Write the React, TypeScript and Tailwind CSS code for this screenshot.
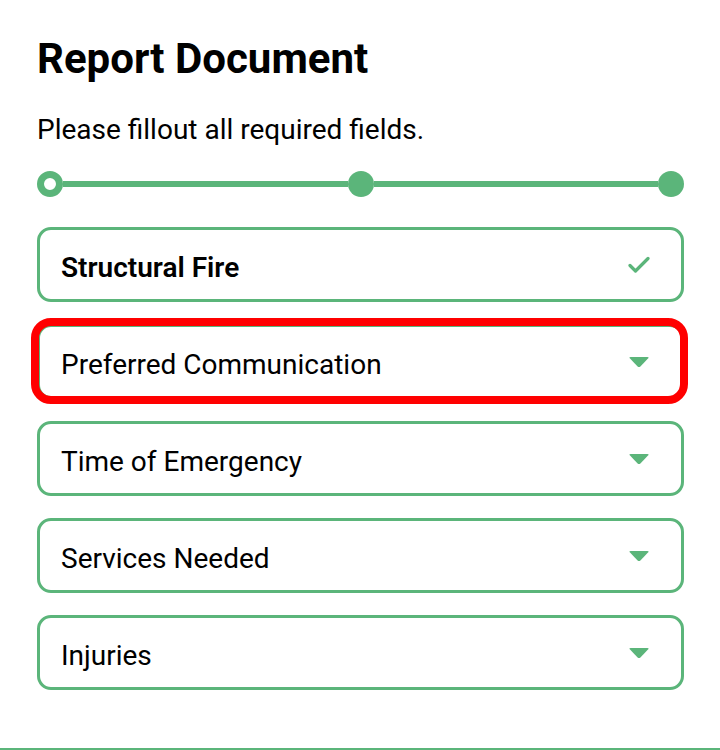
import React from "react";

const G = "#5bb57a";

function Check() {
  return (
    <svg width="22" height="18" viewBox="0 0 22 18" fill="none">
      <path d="M2 9.5 L7.5 15 L20 2.5" stroke={G} strokeWidth="3.2" strokeLinecap="round" strokeLinejoin="round" />
    </svg>
  );
}

function Caret() {
  return (
    <svg width="22" height="12" viewBox="0 0 22 12">
      <path d="M2.5 1 H19.5 Q21.5 1 20 2.6 L12.4 10.4 Q11 11.6 9.6 10.4 L2 2.6 Q0.5 1 2.5 1 Z" fill={G} />
    </svg>
  );
}

function Card({ label, done, highlight }: { label: string; done?: boolean; highlight?: boolean }) {
  return (
    <div className="relative h-[75px] rounded-[14px] border-[3px] border-[#5bb57a] flex items-center pl-[21px] pr-[31px] bg-white">
      <span className={"flex-1 pt-[5px] text-[28px] leading-[33px] text-black " + (done ? "font-semibold" : "font-normal")}>{label}</span>
      {done ? <Check /> : <Caret />}
      {highlight && (
        <span className="pointer-events-none absolute -left-[9px] -right-[7px] -top-[9px] -bottom-[8px] rounded-[20px] border-[8px] border-[#ff0000]" />
      )}
    </div>
  );
}

export default function App() {
  return (
    <div className="w-[720px] h-[750px] bg-white relative overflow-hidden" style={{ fontFamily: "Roboto, 'Liberation Sans', sans-serif" }}>
      <div className="px-[37px] pt-[34px]">
        <h1 className="text-[42px] leading-[50px] font-bold text-black">Report Document</h1>
        <p className="mt-[29px] text-[28px] leading-[33px] text-black">Please fillout all required fields.</p>
        <div className="mt-[25px] flex items-center w-[647px]">
          <div className="w-[26px] h-[26px] rounded-full border-[7px] border-[#5bb57a] bg-white shrink-0" />
          <div className="flex-1 h-[6px] bg-[#5bb57a]" />
          <div className="w-[26px] h-[26px] rounded-full bg-[#5bb57a] shrink-0" />
          <div className="flex-1 h-[6px] bg-[#5bb57a]" />
          <div className="w-[26px] h-[26px] rounded-full bg-[#5bb57a] shrink-0" />
        </div>
        <div className="mt-[30px] flex flex-col gap-[22px] w-[647px]">
          <Card label="Structural Fire" done />
          <Card label="Preferred Communication" highlight />
          <Card label="Time of Emergency" />
          <Card label="Services Needed" />
          <Card label="Injuries" />
        </div>
      </div>
      <div className="absolute left-0 right-0 bottom-0 h-[2px] bg-[#5bb57a]" />
    </div>
  );
}
